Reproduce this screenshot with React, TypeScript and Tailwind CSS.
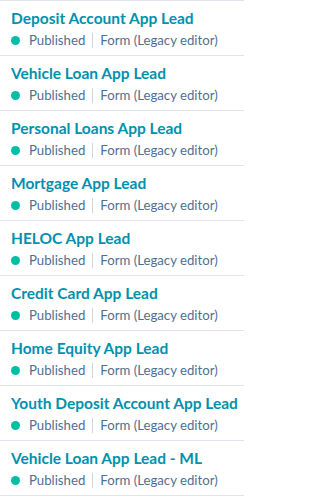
const forms = [
  "Deposit Account App Lead",
  "Vehicle Loan App Lead",
  "Personal Loans App Lead",
  "Mortgage App Lead",
  "HELOC App Lead",
  "Credit Card App Lead",
  "Home Equity App Lead",
  "Youth Deposit Account App Lead",
  "Vehicle Loan App Lead - ML",
];

export default function App() {
  return (
    <div className="w-[244px] bg-white font-['Lato',sans-serif]">
      <ul className="border-t border-[#dfe3eb]">
        {forms.map((name) => (
          <li
            key={name}
            className="h-[55px] border-b border-[#dfe3eb] pl-[11px] pt-[7px]"
          >
            <div className="text-[15.5px] leading-[20px] font-bold text-[#0091ae] whitespace-nowrap">
              {name}
            </div>
            <div className="mt-[3px] flex items-center text-[13.2px] leading-[18px] text-[#516f90] whitespace-nowrap">
              <span className="mr-[9px] h-[9px] w-[9px] rounded-full bg-[#00bda5]" />
              <span>Published</span>
              <span className="ml-[7px] mr-[7px] h-[15px] w-px bg-[#cbd6e2]" />
              <span>Form (Legacy editor)</span>
            </div>
          </li>
        ))}
      </ul>
    </div>
  );
}
